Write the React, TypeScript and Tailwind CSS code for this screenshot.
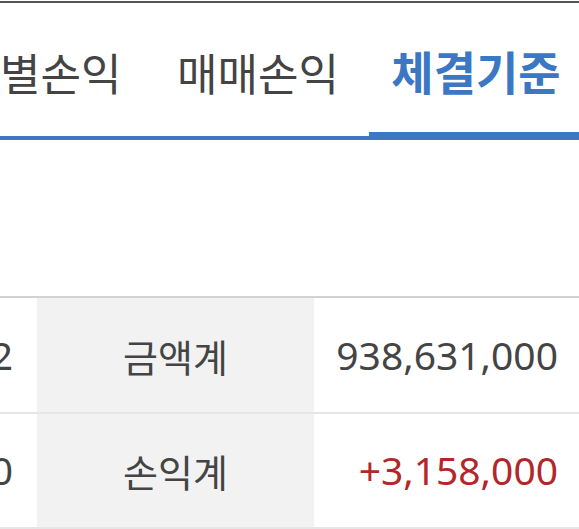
import React from 'react';

const tabs = [
  { name: '별손익', active: false, box: 'w-[159px] justify-start' },
  { name: '매매손익', active: false, box: 'w-[210px] justify-center pr-[12px]' },
  { name: '체결기준', active: true, box: 'w-[210px] justify-center pl-[4px]' },
];

const rows = [
  { prev: '2', label: '금액계', value: '938,631,000', tone: 'text-[#444444]' },
  { prev: '0', label: '손익계', value: '+3,158,000', tone: 'text-[#b3272a]' },
];

const App: React.FC = () => {
  return (
    <div className="w-full h-[529px] bg-white overflow-hidden font-['Noto_Sans','Noto_Sans_CJK_KR',sans-serif]">
      <div className="mt-px h-0.5 bg-[#555555]" />

      {/* Tabs */}
      <nav className="flex justify-end items-stretch h-[137px] border-b-4 border-[#3b77c3] overflow-hidden">
        {tabs.map((tab) => (
          <div
            key={tab.name}
            className={`shrink-0 flex items-center pt-[5px] leading-none whitespace-nowrap ${tab.box} ${
              tab.active
                ? 'border-b-4 border-[#3b77c3] text-[#3b77c3] font-bold text-[46px]'
                : 'text-[#444444] text-[44px]'
            }`}
          >
            <span className="font-['Noto_Sans_CJK_KR',sans-serif]">{tab.name}</span>
          </div>
        ))}
      </nav>

      {/* Summary table */}
      <div className="mt-[156px] border-t-2 border-[#d2d2d2]">
        {rows.map((row, i) => (
          <div
            key={row.label}
            className={`grid grid-cols-[37px_277px_1fr] border-b-2 border-[#e6e6e6] ${
              i === 0 ? 'h-[116px]' : 'h-[115px]'
            }`}
          >
            <div className="flex items-center justify-end overflow-hidden pr-[24px] text-[39px] text-[#444444] whitespace-nowrap">
              {row.prev}
            </div>
            <div className="flex items-center justify-center bg-[#f2f2f2] text-[38px] text-[#444444]">
              <span className="font-['Noto_Sans_CJK_KR',sans-serif]">{row.label}</span>
            </div>
            <div className={`flex items-center justify-end pr-[21px] text-[39px] ${row.tone}`}>
              {row.value}
            </div>
          </div>
        ))}
      </div>
    </div>
  );
};

export default App;
